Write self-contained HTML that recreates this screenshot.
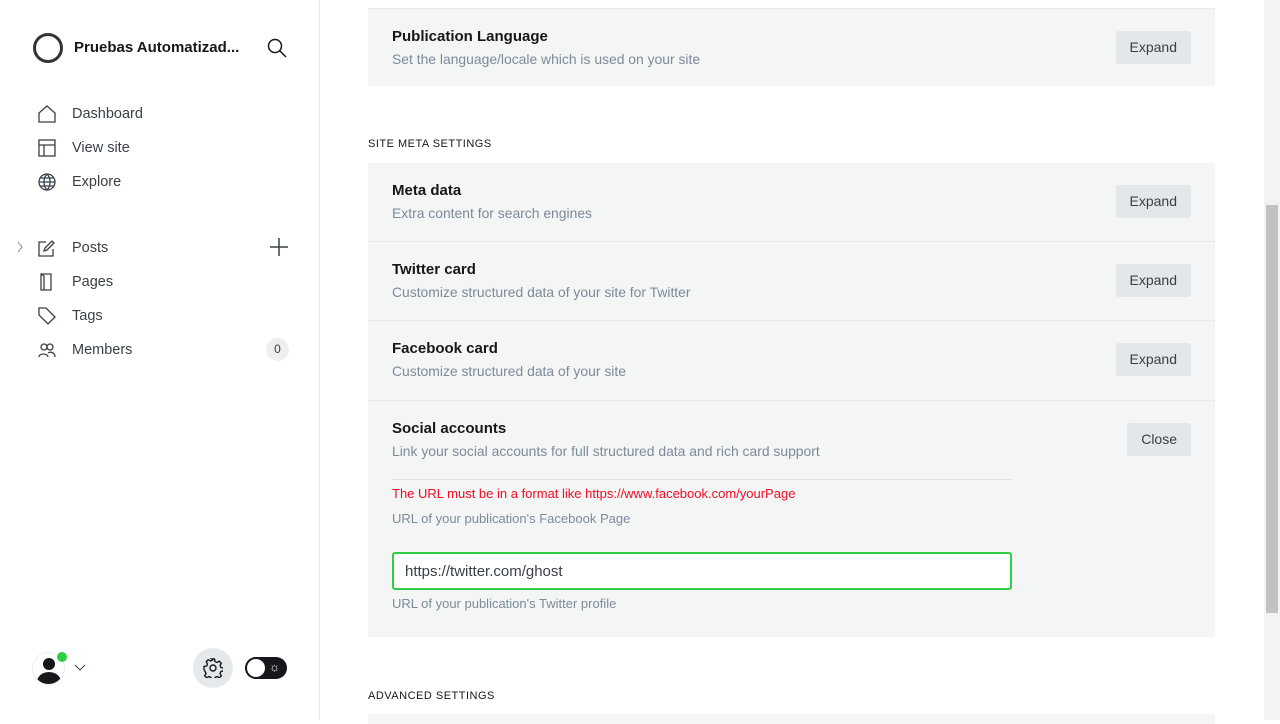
<!DOCTYPE html>
<html><head><meta charset="utf-8"><style>
*{box-sizing:border-box;margin:0;padding:0}
body{width:1280px;height:720px;overflow:hidden;font-family:"Liberation Sans",sans-serif;background:#fff;position:relative;color:#15171a}
.side{position:absolute;left:0;top:0;width:320px;height:720px;border-right:1px solid #e6e9eb}
.nav{position:absolute;left:38px;font-size:14.5px;color:#394047;display:flex;align-items:center}
.nav svg{width:18px;height:18px;margin-right:16px;fill:none;stroke:#394047;stroke-width:1.3}
.card{position:absolute;left:368px;width:847px;background:#f4f5f5}
.row{position:absolute;left:368px;width:847px;background:#f4f5f5;border-bottom:1px solid #e6e9eb}
.t{position:absolute;left:24px;font-size:15px;font-weight:bold;color:#15171a}
.d{position:absolute;left:24px;font-size:13.9px;color:#7c8b9a}
.btn{position:absolute;right:24px;background:#e4e7ea;border-radius:3px;font-size:14px;color:#394047;height:33px;line-height:33px;padding:0 14px}
.h{position:absolute;left:368px;font-size:11px;letter-spacing:.5px;color:#15171a}
.scroll{position:absolute;right:0;top:0;width:16px;height:720px;background:#f3f3f3}
.thumb{position:absolute;right:2px;top:205px;width:12px;height:408px;background:#c1c1c1}
</style></head><body>
<div class="side">
<div style="position:absolute;left:33px;top:33px;width:30px;height:30px;border:3px solid #333;border-radius:50%"></div>
<div style="position:absolute;left:74px;top:39px;font-size:15px;font-weight:bold">Pruebas Automatizad...</div>
<svg style="position:absolute;left:267px;top:38px" width="20" height="20" fill="none" stroke="#15171a" stroke-width="1.5"><circle cx="8" cy="8" r="6.5"/><path d="M13 13l6 6"/></svg>
<div class="nav" style="top:105px"><svg viewBox="0 0 18 18"><path d="M1 8L9 1l8 7v9H1z"/></svg>Dashboard</div>
<div class="nav" style="top:139px"><svg viewBox="0 0 18 18"><rect x="1" y="1" width="16" height="16"/><path d="M1 6h16M6 6v11"/></svg>View site</div>
<div class="nav" style="top:173px"><svg viewBox="0 0 18 18"><circle cx="9" cy="9" r="8"/><path d="M1 9h16M9 1c-4 4-4 12 0 16M9 1c4 4 4 12 0 16M2 5h14M2 13h14"/></svg>Explore</div>
<svg style="position:absolute;left:16px;top:241px" width="8" height="12" fill="none" stroke="#7c8b9a"><path d="M2 1l4 5-4 5"/></svg>
<div class="nav" style="top:239px"><svg viewBox="0 0 18 18"><path d="M8 3H1v14h14v-7M9 11l-3 1 1-3 7-7 2 2z"/></svg>Posts</div>
<svg style="position:absolute;left:270px;top:238px" width="18" height="18" stroke="#394047" stroke-width="1.5"><path d="M9 0v18M0 9h18"/></svg>
<div class="nav" style="top:273px"><svg viewBox="0 0 18 18"><path d="M3 1h10v16H3zM3 1l3 2v14"/></svg>Pages</div>
<div class="nav" style="top:307px"><svg viewBox="0 0 18 18"><path d="M1 1h7l9 9-7 7-9-9z"/></svg>Tags</div>
<div class="nav" style="top:341px"><svg viewBox="0 0 18 18"><circle cx="6" cy="6" r="3"/><circle cx="12" cy="6" r="3"/><path d="M1 16c0-4 9-4 9 0M10 12c3-2 7 0 7 4"/></svg>Members</div>
<div style="position:absolute;left:266px;top:338px;width:23px;height:23px;border-radius:50%;background:#eceef0;font-size:12px;color:#394047;text-align:center;line-height:23px">0</div>
<div style="position:absolute;left:32px;top:652px;width:33px;height:33px;border-radius:50%;border:1px solid #eee;overflow:hidden"><div style="position:absolute;left:10px;top:5px;width:12px;height:12px;border-radius:50%;background:#15171a"></div><div style="position:absolute;left:4px;top:19px;width:24px;height:20px;border-radius:50%;background:#15171a"></div></div>
<div style="position:absolute;left:57px;top:652px;width:10px;height:10px;border-radius:50%;background:#30cf43"></div>
<svg style="position:absolute;left:74px;top:664px" width="13" height="8" fill="none" stroke="#394047"><path d="M1 1l5 5 5-5"/></svg>
<div style="position:absolute;left:193px;top:648px;width:40px;height:40px;border-radius:50%;background:#e6e9eb"></div>
<svg style="position:absolute;left:203px;top:658px" width="20" height="20" viewBox="0 0 20 20" fill="none" stroke="#15171a" stroke-width="1.4"><circle cx="10" cy="10" r="3"/><path d="M8.5 1h3l.5 2.5 2 1 2.3-1.3 2 2-1.2 2.3.8 2 2.6.5v3l-2.6.5-.8 2 1.2 2.3-2 2-2.3-1.3-2 1-.5 2.5h-3l-.5-2.5-2-1-2.3 1.3-2-2 1.3-2.3-.9-2L1 11.5v-3l2.6-.5.9-2-1.3-2.3 2-2 2.300 1.3 2-1z"/></svg>
<div style="position:absolute;left:245px;top:657px;width:42px;height:22px;border-radius:11px;background:#15171a"><div style="position:absolute;left:2px;top:2px;width:18px;height:18px;border-radius:50%;background:#fff"></div><div style="position:absolute;left:24px;top:3px;color:#fff;font-size:12px">☼</div></div>
</div>

<div class="card" style="top:8px;height:78px;border-top:1px solid #e6e9eb">
<div class="t" style="top:19px">Publication Language</div><div class="d" style="top:42px">Set the language/locale which is used on your site</div><div class="btn" style="top:22px">Expand</div></div>
<div class="h" style="top:138px">SITE META SETTINGS</div>
<div class="row" style="top:163px;height:79px"><div class="t" style="top:19px">Meta data</div><div class="d" style="top:42px">Extra content for search engines</div><div class="btn" style="top:22px">Expand</div></div>
<div class="row" style="top:242px;height:79px"><div class="t" style="top:19px">Twitter card</div><div class="d" style="top:42px">Customize structured data of your site for Twitter</div><div class="btn" style="top:22px">Expand</div></div>
<div class="row" style="top:321px;height:80px"><div class="t" style="top:19px">Facebook card</div><div class="d" style="top:42px">Customize structured data of your site</div><div class="btn" style="top:22px">Expand</div></div>
<div class="card" style="top:401px;height:236px"><div class="t" style="top:19px">Social accounts</div><div class="d" style="top:42px">Link your social accounts for full structured data and rich card support</div><div class="btn" style="top:22px">Close</div>
<div style="position:absolute;left:24px;top:78px;width:619px;border-top:1px solid #dde1e5"></div>
<div style="position:absolute;left:24px;top:85px;font-size:13px;color:#f50b23">The URL must be in a format like https://www.facebook.com/yourPage</div>
<div class="d" style="top:110px;font-size:13px">URL of your publication's Facebook Page</div>
<div style="position:absolute;left:24px;top:151px;width:620px;height:38px;background:#fff;border:2px solid #30cf43;border-radius:3px;font-size:15px;padding:9px 11px;color:#394047">https://twitter.com/ghost</div>
<div class="d" style="top:195px;font-size:13px">URL of your publication's Twitter profile</div>
</div>
<div class="h" style="top:690px">ADVANCED SETTINGS</div>
<div class="card" style="top:714px;height:10px"></div>
<div class="scroll"><div class="thumb"></div></div>
</body></html>
